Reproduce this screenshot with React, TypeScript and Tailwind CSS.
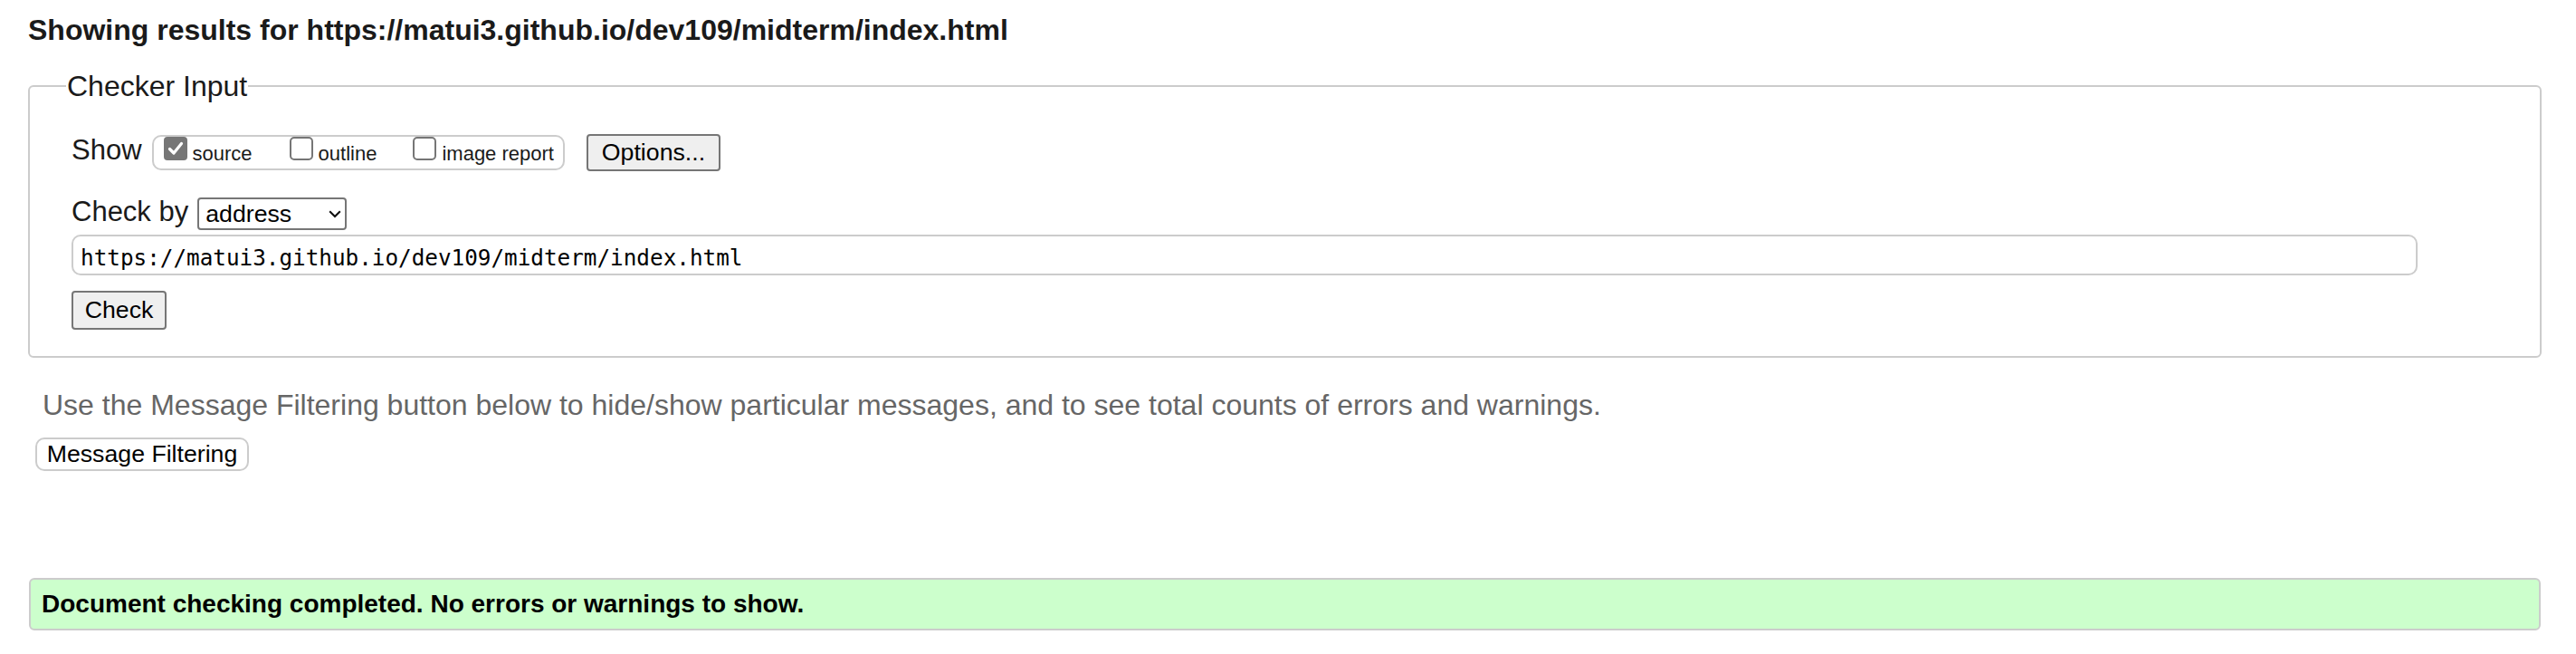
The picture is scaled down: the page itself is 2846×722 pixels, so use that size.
function CheckBox({ checked = false, className = "" }: { checked?: boolean; className?: string }) {
  if (checked) {
    return (
      <span className={`mb-[4px] flex h-[26px] w-[26px] shrink-0 items-center justify-center rounded-[4px] bg-[#767676] ${className}`}>
        <svg width="20" height="20" viewBox="0 0 20 20" fill="none">
          <path d="M3.5 10.5 L8 15 L16.5 4.5" stroke="white" strokeWidth="3.2" strokeLinecap="round" strokeLinejoin="round" />
        </svg>
      </span>
    );
  }
  return (
    <span className={`mb-[4px] block h-[26px] w-[26px] shrink-0 rounded-[5px] border-2 border-[#767676] bg-white ${className}`} />
  );
}

export default function App() {
  return (
    <div className="min-h-screen bg-white pl-[31px] pr-[38px] font-['Liberation_Sans',Arial,sans-serif] text-[#1a1a1a]">
      <h2 className="pt-[16px] text-[32px] font-bold leading-[34px]">
        Showing results for https://matui3.github.io/dev109/midterm/index.html
      </h2>

      <fieldset className="mt-[27px] rounded-[6px] border-2 border-[#ccc]">
        <legend className="ml-[40px] px-[1px] text-[32px] leading-[36px]">Checker Input</legend>
        <div className="pb-[29px] pl-[46px] pr-[135px] pt-[35px]">
          {/* show options */}
          <div className="flex h-[41px] items-center">
            <span className="mb-[6px] text-[31px] leading-[36px]">Show</span>
            <div className="ml-[11px] flex h-[39px] items-end rounded-[10px] border-2 border-[#ccc] pb-[5px] pl-[11px] pr-[10px]">
              <CheckBox checked />
              <span className="ml-[6px] text-[22px] leading-[22px]">source</span>
              <CheckBox className="ml-[41px]" />
              <span className="ml-[6px] text-[22px] leading-[22px]">outline</span>
              <CheckBox className="ml-[40px]" />
              <span className="ml-[6px] text-[22px] leading-[22px]">image report</span>
            </div>
            <button className="ml-[24px] h-[41px] w-[148px] rounded-[4px] border-2 border-[#767676] bg-[#efefef] text-[26.7px] leading-none text-black">
              Options...
            </button>
          </div>

          {/* check by */}
          <div className="mt-[29px] flex h-[36px] items-center">
            <span className="mb-[5px] text-[31px] leading-[36px]">Check by</span>
            <div className="ml-[10px] flex h-[36px] w-[165px] items-center justify-between rounded-[4px] border-2 border-[#767676] bg-white pl-[7px] pr-[4px] text-[26.7px] leading-none text-black">
              <span>address</span>
              <svg width="14" height="9" viewBox="0 0 14 9" fill="none">
                <path d="M1.2 1.2 L7 7 L12.8 1.2" stroke="#111" strokeWidth="2.1" />
              </svg>
            </div>
          </div>

          <input
            readOnly
            defaultValue="https://matui3.github.io/dev109/midterm/index.html"
            className="mt-[5px] block h-[45px] w-full rounded-[10px] border-2 border-[#ccc] bg-white pl-[8px] pt-[6px] font-['DejaVu_Sans_Mono',monospace] text-[24.3px] text-black outline-none"
          />

          <button className="mt-[17px] block h-[43px] w-[105px] rounded-[4px] border-2 border-[#767676] bg-[#efefef] text-[26.7px] leading-none text-black">
            Check
          </button>
        </div>
      </fieldset>

      <p className="ml-[16px] mt-[34px] text-[32px] leading-[36px] text-[#666]">
        Use the Message Filtering button below to hide/show particular messages, and to see total counts of errors and warnings.
      </p>
      <button className="ml-[8px] mt-[18px] block h-[37px] w-[236px] rounded-[10px] border-2 border-[#ccc] bg-white text-[26.7px] leading-none text-black">
        Message Filtering
      </button>

      <div className="mx-[1px] mt-[118px] flex h-[58px] items-center rounded-[6px] border-2 border-[#ccc] bg-[#ccffcc] pl-[12px] text-[28px] font-bold leading-[32px] text-black">
        Document checking completed. No errors or warnings to show.
      </div>
    </div>
  );
}
